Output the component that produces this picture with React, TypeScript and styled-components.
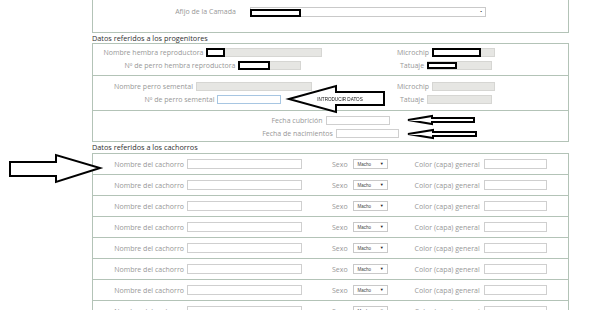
import React from "react";
import styled, { createGlobalStyle } from "styled-components";

const BORDER = "#b3c3b7";
const LABEL = "#979797";

const GlobalStyle = createGlobalStyle`
  *, *::before, *::after { box-sizing: border-box; }
  html, body { margin: 0; padding: 0; overflow: hidden; background: #ffffff; }
  body { font-family: "Open Sans", "DejaVu Sans", sans-serif; }
`;

const Page = styled.div`
  position: relative;
  margin: -10px 0 0 92px;
  width: 477px;
  font-family: "Open Sans", sans-serif;
  font-size: 7px;
  color: ${LABEL};
`;

const TopPanel = styled.div`
  height: 43px;
  border: 1px solid ${BORDER};
  display: flex;
  align-items: center;
  justify-content: center;
  gap: 14px;
`;

const SectionTitle = styled.div<{ $h: number }>`
  height: ${(p) => p.$h}px;
  line-height: ${(p) => p.$h}px;
  color: #2f2f2f;
  font-size: 7.3px;
  white-space: nowrap;
`;

const Panel = styled.div`
  border: 1px solid ${BORDER};
`;

const Group = styled.div<{ $pt: number; $pb: number; $last?: boolean }>`
  padding: ${(p) => p.$pt}px 0 ${(p) => p.$pb}px;
  border-bottom: ${(p) => (p.$last ? "none" : `1px solid ${BORDER}`)};
`;

const GridRow = styled.div`
  display: grid;
  grid-template-columns: 240px 226px;
  height: 13px;
  align-items: center;
`;

const CenterRow = styled.div`
  display: flex;
  justify-content: center;
  align-items: center;
  height: 13px;
`;

const Cell = styled.div`
  display: flex;
  justify-content: center;
  align-items: center;
  gap: 3px;
`;

const Label = styled.span<{ $ml?: number }>`
  white-space: nowrap;
  line-height: 1;
  color: ${LABEL};
  margin-left: ${(p) => p.$ml ?? 0}px;
`;

const FieldBox = styled.div<{ $ml?: number }>`
  position: relative;
  margin-left: ${(p) => p.$ml ?? 0}px;
  display: flex;
`;

const Input = styled.input<{ $w: number; $h?: number; $variant?: "grey" | "white" | "focus" }>`
  display: block;
  width: ${(p) => p.$w}px;
  height: ${(p) => p.$h ?? 9}px;
  padding: 0;
  margin: 0;
  outline: none;
  font: inherit;
  background: ${(p) => (p.$variant === "grey" ? "#e6e6e3" : "#ffffff")};
  border: 1px solid
    ${(p) => (p.$variant === "grey" ? "#d6d6d3" : p.$variant === "focus" ? "#a7c6e2" : "#cfcfcf")};
`;

const Redact = styled.span<{ $w: number; $h?: number; $top?: number }>`
  position: absolute;
  left: 0;
  top: ${(p) => p.$top ?? 0}px;
  width: ${(p) => p.$w}px;
  height: ${(p) => p.$h ?? 9}px;
  background: #ffffff;
  border: 2px solid #000000;
`;

const SelectBox = styled.div<{ $w: number; $ml?: number }>`
  position: relative;
  width: ${(p) => p.$w}px;
  height: 10px;
  margin-left: ${(p) => p.$ml ?? 0}px;
  border: 1px solid #c9c9c9;
  background: #ffffff;
  display: flex;
  align-items: center;
  justify-content: space-between;
  padding: 0 3px 0 4px;
  font-family: "Liberation Sans", sans-serif;
  font-size: 4.5px;
  color: #444;
`;

const Caret = styled.span`
  font-size: 4px;
  color: #222;
  line-height: 1;
`;

const PupRow = styled.div`
  height: 21px;
  border-bottom: 1px solid ${BORDER};
  display: flex;
  align-items: center;
  justify-content: center;
`;

const Annotations = styled.svg`
  position: fixed;
  left: 0;
  top: 0;
  width: 600px;
  height: 310px;
  pointer-events: none;
`;

const ArrowText = styled.text`
  font-family: "Liberation Sans", sans-serif;
  font-size: 4.6px;
  fill: #111;
`;

const pups = Array.from({ length: 8 }, (_, i) => i);

export default function App() {
  return (
    <>
      <GlobalStyle />
      <Page>
        <TopPanel>
          <Label>Afijo de la Camada</Label>
          <FieldBox>
            <SelectBox $w={236}>
              <span />
              <Caret>▪</Caret>
            </SelectBox>
            <Redact $w={51} $h={8} $top={2} />
          </FieldBox>
        </TopPanel>

        <SectionTitle $h={10}>Datos referidos a los progenitores</SectionTitle>
        <Panel>
          <Group $pt={2} $pb={3}>
            <GridRow>
              <Cell>
                <Label>Nombre hembra reproductora</Label>
                <FieldBox>
                  <Input readOnly $w={116} $variant="grey" />
                  <Redact $w={19} $top={0} />
                </FieldBox>
              </Cell>
              <Cell>
                <Label>Microchip</Label>
                <FieldBox>
                  <Input readOnly $w={63} $variant="grey" />
                  <Redact $w={49} $top={0} />
                </FieldBox>
              </Cell>
            </GridRow>
            <GridRow>
              <Cell>
                <Label>Nº de perro hembra reproductora</Label>
                <FieldBox>
                  <Input readOnly $w={63} $variant="grey" />
                  <Redact $w={32} $top={0} />
                </FieldBox>
              </Cell>
              <Cell>
                <Label>Tatuaje</Label>
                <FieldBox>
                  <Input readOnly $w={65} $variant="grey" />
                  <Redact $w={30} $h={7} $top={1} />
                </FieldBox>
              </Cell>
            </GridRow>
          </Group>

          <Group $pt={4} $pb={4}>
            <GridRow>
              <Cell>
                <Label>Nombre perro semental</Label>
                <Input readOnly $w={116} $variant="grey" />
              </Cell>
              <Cell>
                <Label>Microchip</Label>
                <Input readOnly $w={63} $variant="grey" />
              </Cell>
            </GridRow>
            <GridRow>
              <Cell>
                <Label>Nº de perro semental</Label>
                <Input readOnly $w={64} $variant="focus" />
              </Cell>
              <Cell>
                <Label>Tatuaje</Label>
                <Input readOnly $w={65} $variant="grey" />
              </Cell>
            </GridRow>
          </Group>

          <Group $pt={3} $pb={1} $last>
            <CenterRow>
              <Cell>
                <Label>Fecha cubrición</Label>
                <Input readOnly $w={64} $variant="white" />
              </Cell>
            </CenterRow>
            <CenterRow>
              <Cell>
                <Label>Fecha de nacimientos</Label>
                <Input readOnly $w={63} $variant="white" />
              </Cell>
            </CenterRow>
          </Group>
        </Panel>

        <SectionTitle $h={11}>Datos referidos a los cachorros</SectionTitle>
        <Panel>
          {pups.map((i) => (
            <PupRow key={i}>
              <Label>Nombre del cachorro</Label>
              <FieldBox $ml={3}>
                <Input readOnly $w={115} $h={10} $variant="white" />
              </FieldBox>
              <Label $ml={30}>Sexo</Label>
              <SelectBox $w={35} $ml={5}>
                <span>Macho</span>
                <Caret>▼</Caret>
              </SelectBox>
              <Label $ml={27}>Color (capa) general</Label>
              <FieldBox $ml={4}>
                <Input readOnly $w={63} $h={10} $variant="white" />
              </FieldBox>
            </PupRow>
          ))}
        </Panel>
      </Page>

      <Annotations viewBox="0 0 600 310">
        <polygon
          points="289,99 336,86 336,92 384,92 384,105 336,105 336,112"
          fill="#ffffff"
          stroke="#000000"
          strokeWidth="2"
          strokeLinejoin="miter"
        />
        <ArrowText x="340" y="101" textAnchor="middle">INTRODUCIR DATOS</ArrowText>
        <polygon
          points="408,120 432,116 432,118 474,118 474,122 432,122 432,124"
          fill="#ffffff"
          stroke="#000000"
          strokeWidth="2"
        />
        <polygon
          points="408,134 433,130 433,132 476,132 476,136 433,136 433,138"
          fill="#ffffff"
          stroke="#000000"
          strokeWidth="2"
        />
        <polygon
          points="10,162 56,162 56,155 100,168 56,182 56,176 10,176"
          fill="#ffffff"
          stroke="#000000"
          strokeWidth="2"
        />
      </Annotations>
    </>
  );
}
